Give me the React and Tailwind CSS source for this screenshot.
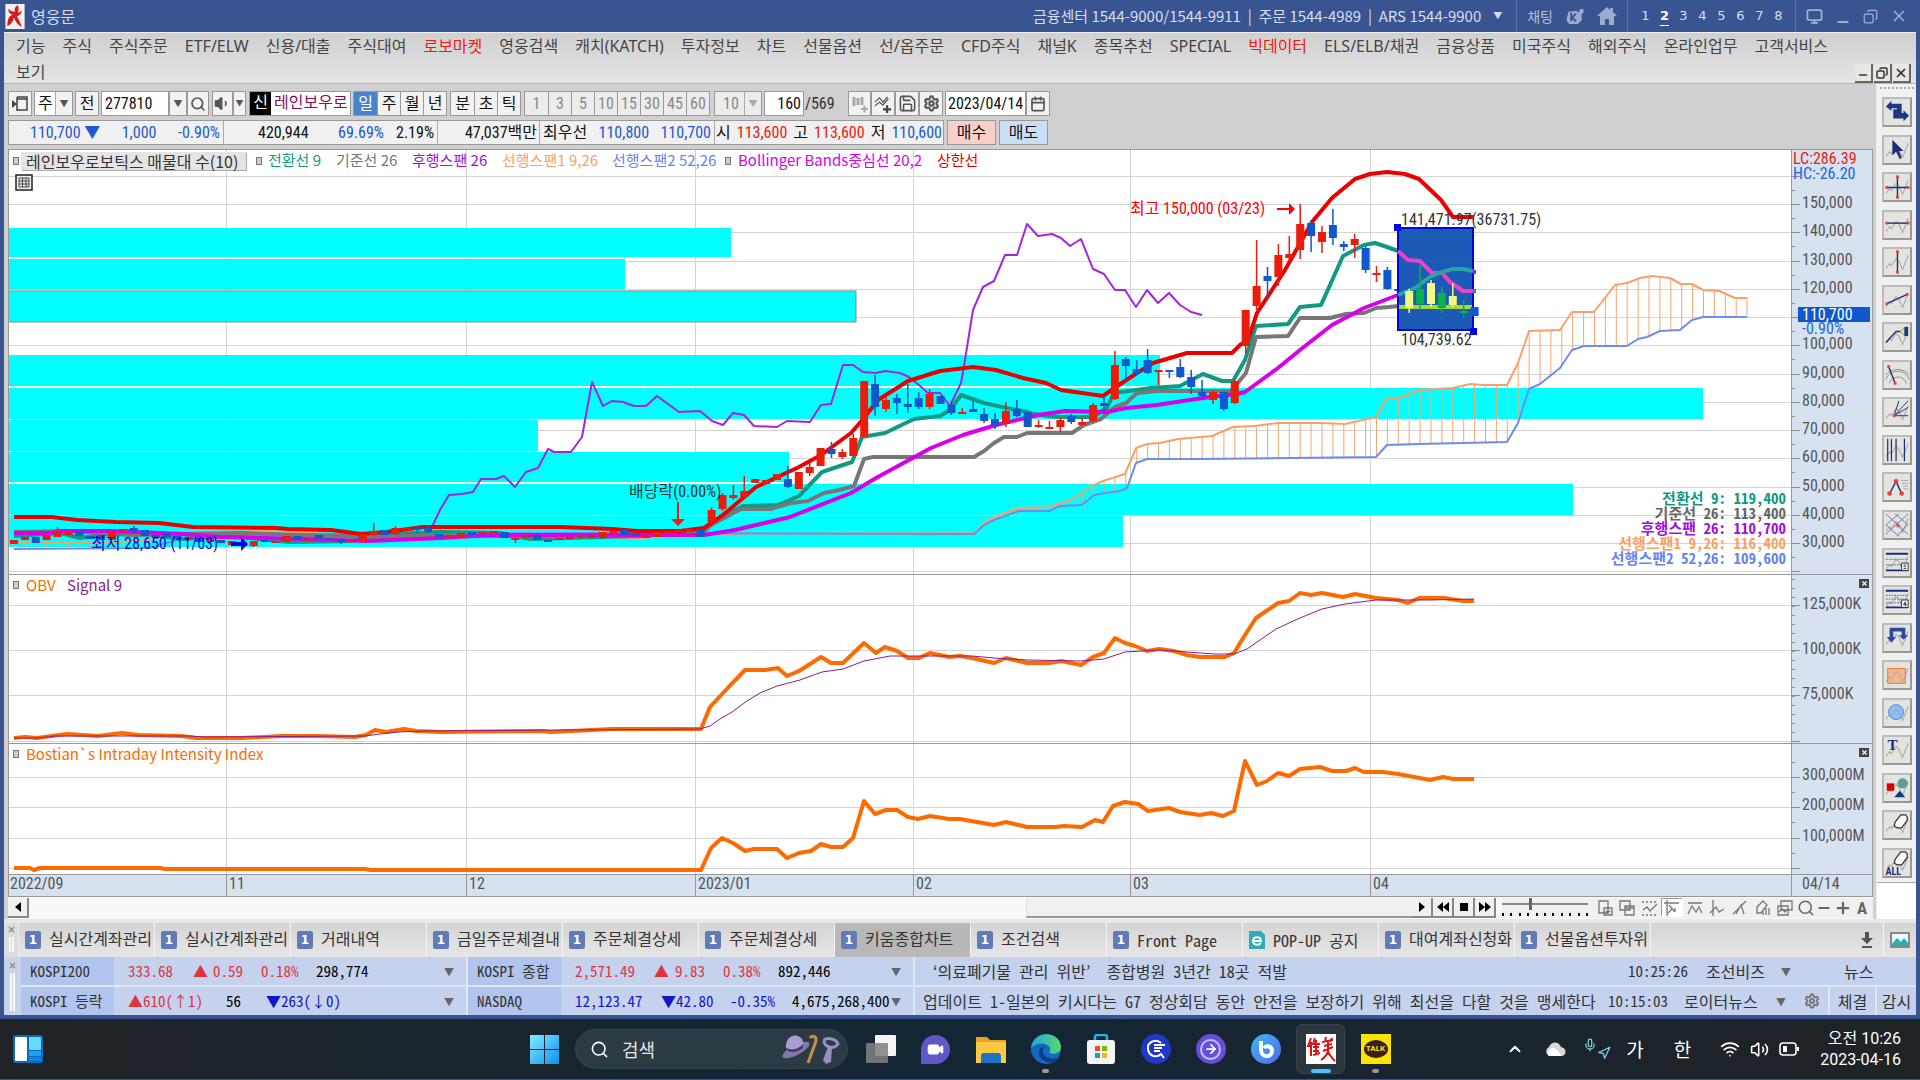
import React from "react";
import {
  Search, Settings, Save, Minus, Plus, Copy, ChevronUp,
  Wifi, Volume2, Mic, Navigation, Volume1, Calendar, Monitor, X, ArrowRight, Video,
} from "lucide-react";

const SANS = "font-['Roboto_Condensed','Noto_Sans_CJK_KR',sans-serif]";
const WIDE = "font-['Noto_Sans_CJK_KR',sans-serif]";
const MENU_FONT = "font-['Noto_Sans','Noto_Sans_CJK_KR',sans-serif]";
const MONO = "font-['Noto_Sans_Mono_CJK_KR',monospace]";

/* ---------- chart data ---------- */

const barX = (i) => 14 + 10.9 * i;
const priceY = (p) => 543 - 2.825 * (p - 30);

// index, colour, body top, body bottom, wick top, wick bottom
const CANDLES = [
  [0, "r", 540, 544], [1, "r", 537, 540], [2, "b", 537, 543], [3, "r", 535, 540], [4, "r", 532, 537, 527, 537],
  [5, "r", 532, 535], [6, "b", 531, 536], [7, "b", 536, 539], [8, "b", 535, 540], [9, "r", 531, 540],
  [10, "r", 529, 532], [11, "b", 528, 531, 526, 533], [12, "b", 530, 536], [13, "b", 535, 538], [14, "b", 533, 537],
  [15, "b", 536, 539], [16, "r", 537, 540], [17, "b", 538, 542], [18, "r", 539, 542], [19, "b", 540, 543],
  [20, "r", 541, 545], [22, "r", 541, 546, 541, 547], [23, "b", 540, 542], [24, "r", 541, 543], [25, "r", 536, 542],
  [26, "b", 536, 540], [27, "r", 539, 541], [28, "b", 535, 539], [29, "b", 538, 540], [30, "b", 539, 542, 539, 544],
  [31, "r", 540, 542], [32, "r", 534, 541], [33, "r", 531, 535, 523, 536], [34, "b", 530, 535], [35, "r", 528, 534, 526, 535],
  [36, "r", 528, 530], [37, "b", 528, 530, 526, 533], [38, "b", 528, 532, 526, 533], [39, "b", 534, 537], [40, "r", 535, 537],
  [41, "r", 533, 537], [42, "b", 532, 535], [43, "r", 532, 534], [44, "r", 531, 533], [45, "b", 532, 538],
  [46, "r", 538, 540, 537, 543], [47, "r", 536, 538], [48, "b", 535, 540], [49, "b", 540, 541], [50, "r", 538, 540],
  [51, "r", 537, 539], [52, "r", 536, 538], [53, "r", 536, 538], [54, "r", 532, 538], [55, "r", 531, 534],
  [56, "b", 530, 535], [57, "b", 533, 536], [58, "r", 536, 537], [59, "r", 532, 537], [60, "r", 531, 533],
  [61, "r", 530, 532], [62, "r", 529, 532], [63, "b", 529, 537], [64, "r", 510, 522, 507, 524], [65, "r", 495, 509, 493, 511],
  [66, "r", 495, 498, 485, 500], [67, "r", 491, 497, 476, 498], [68, "r", 479, 483], [69, "r", 480, 484], [70, "r", 474, 480],
  [71, "b", 479, 487, 466, 488], [72, "r", 472, 489], [73, "r", 467, 473, 462, 476], [74, "r", 448, 466], [75, "b", 449, 454, 442, 458],
  [76, "r", 452, 457, 449, 459], [77, "r", 438, 456, 434, 456], [78, "r", 381, 437], [79, "b", 384, 407, 375, 416], [80, "r", 400, 409, 397, 412],
  [81, "b", 398, 403, 394, 414], [82, "b", 404, 407, 384, 413], [83, "b", 398, 407, 392, 409], [84, "r", 394, 407, 389, 409], [85, "b", 396, 404],
  [86, "b", 405, 413, 401, 415], [87, "r", 412, 414, 408, 414], [88, "b", 409, 412, 401, 412], [89, "b", 414, 421, 408, 423], [90, "b", 419, 426, 413, 429],
  [91, "r", 411, 424, 402, 427], [92, "b", 409, 416, 400, 417], [93, "b", 412, 427], [94, "r", 425, 426, 420, 428], [95, "r", 427, 429, 421, 428],
  [96, "r", 420, 427, 418, 432], [97, "b", 416, 422, 414, 424], [98, "r", 422, 425, 418, 425], [99, "r", 405, 421, 403, 422], [100, "b", 403, 406, 395, 412],
  [101, "r", 365, 399, 351, 400], [102, "b", 359, 366, 357, 381], [103, "b", 369, 373, 360, 375], [104, "b", 360, 373, 349, 374], [105, "r", 370, 372, 370, 385],
  [106, "b", 370, 372, 370, 378], [107, "b", 367, 377, 359, 378], [108, "b", 377, 387, 370, 394], [109, "b", 392, 396, 380, 397], [110, "r", 392, 400, 391, 404],
  [111, "b", 392, 409, 391, 411], [112, "r", 381, 403, 380, 404], [113, "r", 310, 346, 310, 353], [114, "r", 286, 306, 240, 310], [115, "b", 276, 281, 267, 298],
  [116, "r", 255, 277, 244, 286], [117, "r", 254, 258, 236, 262], [118, "r", 224, 250, 204, 259], [119, "b", 223, 236, 220, 252], [120, "r", 232, 242, 226, 253],
  [121, "b", 225, 238, 209, 245], [122, "b", 244, 247, 241, 251], [123, "r", 239, 245, 234, 258], [124, "b", 248, 270, 246, 273], [125, "r", 273, 275, 266, 282],
  [126, "b", 270, 289, 267, 290], [127, "b", 289, 291],
];
const BOX_CANDLES = [
  [128, "y", 291, 308, 289, 313], [129, "g", 289, 304, 265, 310], [130, "y", 283, 304, 280, 307], [131, "g", 293, 308, 287, 313],
  [132, "y", 296, 305, 283, 307], [133, "g", 311, 313, 300, 317], [134, "b", 307, 316],
];
const CANDLE_FILL = { r: "#ea1c0c", b: "#1058cc", y: "#f2f880", g: "#08b050" };

const P = (s) => s.trim().split(/\s+/).map((q) => q.split(",").map(Number));

const BAND = "14,517 52,517 77,520 116,522 159,523 193,527 276,528 288,529 331,530 361,534 386,532 423,527 560,527 612,529 637,531 680,531 704,528 723,515 756,487 799,467 821,455 851,433 864,418 878,400 908,381 940,371 973,367 996,370 1023,378 1046,383 1061,390 1103,396 1116,387 1137,373 1153,363 1187,353 1232,353 1240,345 1248,340 1257,313 1285,270 1312,222 1332,198 1355,179 1370,174 1387,172 1405,174 1419,179 1441,200 1453,217 1474,217";
const TENKAN = "14,536 60,533 80,538 130,531 180,539 230,536 290,542 350,541 390,534 440,532 500,533 530,539 640,536 704,531 711,523 743,506 778,505 799,496 822,472 852,462 862,437 885,433 914,419 940,416 950,410 961,395 984,403 1007,408 1023,411 1034,414 1057,417 1093,417 1107,408 1114,393 1151,388 1180,386 1203,374 1222,381 1233,381 1245,360 1256,326 1288,324 1300,307 1321,305 1330,285 1343,256 1364,245 1375,243 1387,247 1398,251";
const KIJUN = "14,532 70,531 130,535 240,533 300,535 380,537 440,535 560,537 704,532 711,525 741,509 770,509 791,503 808,501 824,493 839,490 854,486 864,459 873,457 974,457 984,451 994,443 1004,437 1017,437 1027,433 1072,433 1084,425 1101,419 1115,407 1126,403 1137,393 1157,391 1231,391 1246,373 1256,337 1288,336 1300,318 1330,318 1346,314 1364,313 1376,308 1389,307 1398,306";
const CENTER = "14,533 52,533 60,531 110,531 184,534 220,537 306,539 367,541 441,538 490,535 704,535 735,530 790,517 851,493 876,478 931,448 963,435 996,425 1038,415 1065,411 1107,412 1126,408 1157,405 1183,401 1210,397 1237,394 1245,392 1278,368 1300,350 1332,325 1364,308 1398,295";
const CHIKOU = "432,527 440,510 449,495 462,494 473,492 481,479 496,479 504,476 515,487 526,472 538,468 548,449 554,452 571,452 582,437 592,382 603,406 612,401 623,402 634,406 646,406 657,396 679,412 700,411 712,421 723,425 733,413 744,415 754,426 777,427 787,421 810,422 821,405 831,404 843,365 853,365 863,372 876,373 885,371 900,373 909,377 919,385 928,393 940,393 950,406 961,383 964,366 973,310 983,287 994,281 1005,255 1017,255 1027,224 1038,236 1052,234 1061,238 1070,246 1081,239 1093,269 1104,274 1115,290 1125,290 1136,307 1147,290 1158,303 1169,293 1180,305 1191,312 1202,315";
const SPAN_A = "14,543 100,543 150,540 190,532 270,531 350,535 400,531 500,535 560,538 640,538 700,534 974,533 984,523 994,517 1019,508 1049,507 1071,500 1094,485 1103,481 1125,474 1136,448 1147,444 1160,443 1178,439 1212,436 1233,427 1254,426 1278,423 1321,423 1345,424 1376,417 1387,398 1398,398 1419,390 1453,388 1470,384 1484,385 1507,385 1518,363 1529,331 1560,330 1572,312 1594,312 1615,285 1627,283 1640,278 1652,276 1670,278 1681,284 1692,284 1703,290 1719,291 1735,298 1747,298";
const SPAN_B = "14,549 150,548 190,536 300,534 600,533 974,534 984,525 994,520 1019,511 1049,511 1060,506 1082,505 1094,495 1105,493 1120,491 1127,488 1136,463 1147,459 1202,459 1376,457 1387,445 1419,444 1507,442 1518,423 1529,389 1540,384 1560,368 1572,350 1584,346 1627,346 1638,339 1647,337 1660,331 1680,330 1692,320 1703,317 1747,317";
const OBV = "14,738 25,737 37,738 52,736 67,734 98,736 122,733 138,735 181,736 196,738 242,738 282,736 318,736 355,737 366,735 375,730 386,732 404,729 416,731 441,732 542,731 551,732 612,729 701,729 710,707 723,693 745,670 765,670 778,668 787,676 799,671 821,657 831,663 843,663 864,643 876,653 885,647 897,651 908,658 919,658 930,653 949,657 960,656 972,658 994,663 1006,658 1027,663 1049,663 1061,661 1081,665 1093,657 1104,653 1115,638 1125,643 1135,646 1147,651 1159,649 1174,651 1187,655 1200,657 1225,657 1234,653 1245,635 1256,618 1278,603 1289,601 1300,593 1311,595 1322,593 1343,597 1355,594 1376,598 1398,600 1408,603 1419,598 1444,598 1463,601 1474,601";
const SIGNAL = "14,738 37,738 55,736 190,736 205,737 365,736 380,734 398,732 425,731 700,729 710,726 720,719 732,712 747,701 760,693 777,686 800,680 822,672 843,669 864,661 890,656 940,656 972,656 994,658 1027,660 1081,661 1104,659 1125,652 1159,650 1187,652 1215,654 1234,654 1247,649 1260,640 1276,629 1300,618 1322,609 1345,604 1376,600 1430,600 1474,599";
const BII = "14,868 30,868 34,870 40,868 160,868 165,869 365,869 370,870 701,870 711,848 722,838 733,843 745,851 754,849 777,849 787,858 799,853 811,851 821,844 831,847 843,847 853,838 864,801 875,814 886,810 897,810 908,817 918,819 930,816 949,819 960,819 994,825 1006,822 1027,827 1055,827 1064,826 1082,827 1095,820 1103,822 1113,806 1125,802 1138,804 1148,811 1169,808 1180,812 1200,815 1211,813 1223,816 1234,811 1245,761 1257,785 1267,781 1278,773 1289,776 1300,769 1320,767 1332,771 1346,771 1355,768 1364,772 1383,772 1398,774 1430,780 1443,777 1453,779 1474,779";

const PROFILE = [
  [228, 29, 731], [259, 31, 625], [291, 31, 856, true], [355, 31, 1160], [388, 31, 1703],
  [420, 31, 538], [452, 30, 789], [484, 31, 1573], [516, 31, 1123],
];

const MONTHS = [[227, "11"], [467, "12"], [696, "2023/01"], [914, "02"], [1131, "03"], [1371, "04"]];

function at(points, x) {
  for (let i = 1; i < points.length; i++) {
    const [x0, y0] = points[i - 1];
    const [x1, y1] = points[i];
    if (x <= x1) return y0 + ((y1 - y0) * (x - x0)) / (x1 - x0);
  }
  return points[points.length - 1][1];
}

function Line({ pts, color, w }) {
  return <polyline points={pts} fill="none" stroke={color} strokeWidth={w} strokeLinejoin="round" />;
}

function Candle({ c }) {
  const [i, k, t, b, wt, wb] = c;
  const x = barX(i);
  return (
    <g fill={CANDLE_FILL[k]}>
      {wt !== undefined && <rect x={x - 0.75} y={wt} width="1.5" height={wb - wt} />}
      <rect x={x - 4} y={t} width="8" height={Math.max(b - t, 2)} />
    </g>
  );
}

function T({ x, y, fill = "#555", anchor, bold, size = 16, className, children }) {
  return (
    <text x={x} y={y} fill={fill} textAnchor={anchor} fontSize={size} fontWeight={bold ? 700 : 400} className={className}>
      {children}
    </text>
  );
}

function Chart() {
  const a = P(SPAN_A);
  const b = P(SPAN_B);
  const hatch = [];
  for (let i = 0; i < 13; i++) hatch.push(barX(i));
  for (let i = 89; i <= 159; i++) hatch.push(Math.min(barX(i), 1747));
  const grid = [];
  for (let p = 20; p <= 160; p += 10) grid.push(Math.round(priceY(p)));
  const subGrid = [605, 650, 695, 741, 777, 807, 838, 868];
  const minor = [];
  for (let p = 25; p <= 155; p += 10) minor.push(Math.round(priceY(p)));
  for (let y = 579; y < 741; y += 9) minor.push(y);
  [762, 792, 822, 853].forEach((y) => minor.push(y));
  const prices = [150, 140, 130, 120, 100, 90, 80, 70, 60, 50, 40, 30];
  return (
    <svg viewBox="8 149 1865 748" className={`block h-auto w-full ${SANS}`} role="img" aria-label="레인보우로보틱스 일봉 차트">
      <rect x="8" y="149" width="1865" height="748" fill="#fff" />
      <g fill="#d4d4d4">
        {grid.concat(subGrid).map((y, i) => <rect key={i} x="8" y={y} width="1784" height="1" />)}
        {MONTHS.map(([x]) => <rect key={x} x={x - 1} y="149" width="1" height="726" />)}
      </g>
      {PROFILE.map(([y, h, r, lined]) => (
        <rect key={y} x="7" y={y} width={r - 7} height={h} fill="#00ffff" stroke={lined ? "#888" : "none"} />
      ))}
      <g stroke="#f8a46c" strokeWidth="1">
        {hatch.map((x) => <line key={x} x1={x} x2={x} y1={at(a, x)} y2={at(b, x)} />)}
      </g>
      <Line pts={SPAN_A} color="#f8a068" w={2} />
      <Line pts={SPAN_B} color="#6c8cf0" w={2} />
      <Line pts={CHIKOU} color="#a424e0" w={2} />
      <Line pts={TENKAN} color="#109a84" w={4} />
      <Line pts={KIJUN} color="#777" w={4} />
      <Line pts={CENTER} color="#d800ea" w={4} />
      <Line pts={BAND} color="#ea0000" w={4} />
      {CANDLES.map((c) => <Candle key={c[0]} c={c} />)}

      {/* selected range */}
      <rect x="1398" y="228" width="75" height="102" fill="#1c5ab8" stroke="#0404e0" strokeWidth="2" />
      <g stroke="#1868a8"><path d="M1399 261h73M1399 233h73" /></g>
      <rect x="1399" y="305" width="73" height="4" fill="#a4dc30" />
      <Line pts="1398,251 1408,260 1420,261 1432,273 1442,273 1450,282 1463,291 1473,291" color="#f040c4" w={4} />
      <Line pts="1398,295 1415,288 1430,277 1442,272 1453,269 1463,269 1473,271" color="#28a4a4" w={4} />
      {BOX_CANDLES.map((c) => <Candle key={c[0]} c={c} />)}
      <rect x="1473" y="270" width="3" height="4" fill="#d800ea" />
      <rect x="1473" y="289" width="3" height="4" fill="#109a84" />
      <rect x="1394" y="224" width="7" height="7" fill="#0404e0" />
      <rect x="1470" y="328" width="7" height="7" fill="#0404e0" />
      <T x="1401" y="225" fill="#333">141,471.97(36731.75)</T>
      <T x="1401" y="345" fill="#333">104,739.62</T>

      {/* extremes */}
      <T x="1130" y="214" fill="#f00">최고 150,000 (03/23)</T>
      <path d="M1277 208h12v-5l6 6-6 6v-5h-12z" fill="#f00" />
      <T x="91" y="549" fill="#0000f0">최저 28,650 (11/03)</T>
      <path d="M231 542h10v-5l7 7-7 7v-5h-10z" fill="#0000f0" />
      <T x="629" y="497" fill="#333">배당락(0.00%)</T>
      <path d="M677 502h2v17h6l-7 7-7-7h6z" fill="#ea1c0c" />

      {/* lower panes */}
      <Line pts={OBV} color="#ff6a00" w={4} />
      <Line pts={SIGNAL} color="#8a1c8a" w={1} />
      <Line pts={BII} color="#ff6a00" w={4} />

      {/* current values */}
      <g className={MONO}>
        <T x="1786" y="504" fill="#109a84" anchor="end" bold size={15}>전환선 9: 119,400</T>
        <T x="1786" y="519" fill="#666" anchor="end" bold size={15}>기준선 26: 113,400</T>
        <T x="1786" y="534" fill="#a010e0" anchor="end" bold size={15}>후행스팬 26: 110,700</T>
        <T x="1786" y="549" fill="#f8a068" anchor="end" bold size={15}>선행스팬1 9,26: 116,400</T>
        <T x="1786" y="564" fill="#6484f0" anchor="end" bold size={15}>선행스팬2 52,26: 109,600</T>
      </g>

      {/* value axis */}
      <rect x="1792" y="149" width="81" height="748" fill="#d6e2f0" />
      <g fill="#8c9096">
        {grid.concat(subGrid).map((y, i) => <rect key={i} x="1792" y={y} width="8" height="1" />)}
        {minor.map((y, i) => <rect key={i} x="1792" y={y} width="3" height="1" />)}
      </g>
      {prices.map((p) => <T key={p} x="1802" y={priceY(p) + 4}>{`${p},000`}</T>)}
      {[["125,000K", 609], ["100,000K", 654], ["75,000K", 699], ["300,000M", 780], ["200,000M", 810], ["100,000M", 841]].map(([s, y]) => (
        <T key={s} x="1802" y={y}>{s}</T>
      ))}
      <T x="1793" y="164" fill="#ea1c0c">LC:286.39</T>
      <T x="1793" y="179" fill="#1c64dc">HC:-26.20</T>
      <rect x="1798" y="307" width="72" height="15" fill="#1058cc" />
      <T x="1802" y="320" fill="#fff">110,700</T>
      <T x="1802" y="334" fill="#1c64dc">-0.90%</T>

      {/* date axis */}
      <rect x="8" y="875" width="1865" height="22" fill="#d6e2f0" />
      <T x="10" y="889">2022/09</T>
      {MONTHS.map(([x, s]) => (
        <g key={x}>
          <rect x={x - 1} y="875" width="1" height="22" fill="#999" />
          <T x={x + 2} y="889">{s}</T>
        </g>
      ))}
      <T x="1802" y="889">04/14</T>
      <g fill="#999">
        <rect x="8" y="149" width="1865" height="1" />
        <rect x="8" y="574" width="1865" height="1" />
        <rect x="8" y="743" width="1865" height="1" />
        <rect x="8" y="874" width="1865" height="1" />
        <rect x="8" y="896" width="1865" height="1" />
        <rect x="8" y="149" width="1" height="748" />
        <rect x="1791" y="149" width="1" height="748" />
        <rect x="1872" y="149" width="1" height="748" />
      </g>
    </svg>
  );
}

/* ---------- title bar and menu ---------- */

function FlameLogo({ className }) {
  return (
    <svg viewBox="0 0 20 26" className={className} aria-hidden="true">
      <rect width="20" height="26" fill="#f2f2f2" />
      <path d="M13 1c-3 2-4 4-3 7-3 0-5-1-7-3 0 4 2 6 5 6-4 1-6 5-6 12 3-1 6-4 7-9 1 4 4 8 8 10-1-4-3-8-5-11 3-1 5-3 5-6-1 1-3 2-4 2 1-3 1-5 0-8z" fill="#d81c1c" />
    </svg>
  );
}

function TitleBar() {
  return (
    <header className={`flex h-8 items-center pl-[1px] pr-[8px] text-[15px] text-[#d6def0] ${WIDE}`}>
      <FlameLogo className="h-[25px] w-[20px]" />
      <h1 className="ml-[6px] text-[16px]">영웅문</h1>
      <div className="ml-auto flex items-center whitespace-pre">
        <span>금융센터 1544-9000/1544-9911  |  주문 1544-4989  |  ARS 1544-9900</span>
        <button aria-label="번호 목록" className="ml-3 text-[9px]">▼</button>
        <span className="ml-[14px] h-8 w-px bg-[#5a72a8]" />
        <button className="ml-[10px] text-[14px] text-[#b0bedc]">채팅</button>
        <svg viewBox="0 0 20 20" className="ml-3 h-[19px] w-[20px]" aria-hidden="true">
          <path d="M3 5l9-1 1 2 2-2V2h4v4l-2 1v7l-4 4H4l-3-4z" fill="#9cacd0" />
          <path d="M6 6v9M11 7l-4 4 4 4" stroke="#395591" strokeWidth="2" fill="none" />
        </svg>
        <svg viewBox="0 0 20 18" className="ml-3 h-[18px] w-[20px]" aria-hidden="true">
          <path d="M10 0L0 9h3v9h5v-6h4v6h5V9h3l-4-4V1h-3v2z" fill="#9cacd0" />
        </svg>
        <span className="ml-[10px] h-8 w-px bg-[#5a72a8]" />
        <nav className="ml-[8px] flex font-['DejaVu_Sans',sans-serif] text-[13px]">
          {[1, 2, 3, 4, 5, 6, 7, 8].map((n) => (
            <button key={n} className={n === 2 ? "mx-[5px] h-5 w-[9px] border-b border-white font-bold text-white" : "mx-[5px] h-5 w-[9px]"}>{n}</button>
          ))}
        </nav>
        <span className="ml-[7px] h-8 w-px bg-[#5a72a8]" />
        <div className="ml-[10px] flex items-center gap-3 text-[#a0b0d4]">
          <button aria-label="화면"><Monitor size={17} strokeWidth={2.5} /></button>
          <button aria-label="최소화"><Minus size={16} strokeWidth={3} className="mt-3" /></button>
          <button aria-label="이전 크기"><Copy size={15} className="-scale-x-100" /></button>
          <button aria-label="닫기"><X size={18} /></button>
        </div>
      </div>
    </header>
  );
}

const MENU = "기능,주식,주식주문,ETF/ELW,신용/대출,주식대여,로보마켓,영웅검색,캐치(KATCH),투자정보,차트,선물옵션,선/옵주문,CFD주식,채널K,종목추천,SPECIAL,빅데이터,ELS/ELB/채권,금융상품,미국주식,해외주식,온라인업무,고객서비스".split(",");

function MenuBar() {
  const box = "flex h-[19px] w-[18px] items-center justify-center border-b-2 border-r-2 border-[#666] bg-[#e8e8e0] text-[#333]";
  return (
    <div className="relative h-[52px] border-b border-t border-b-[#b4b4b4] border-t-[#eee] bg-linear-to-b from-[#d0d0d0] to-[#e4e4e4]">
      <nav className={`flex flex-wrap gap-x-[17px] pl-3 text-base leading-[26px] text-[#444] ${MENU_FONT}`}>
        {MENU.map((m) => (
          <button key={m} className={m === "로보마켓" || m === "빅데이터" ? "text-[#f01c0c]" : ""}>{m}</button>
        ))}
        <span className="basis-full"><button>보기</button></span>
      </nav>
      <div className="absolute bottom-0 right-[5px] flex gap-px">
        <button aria-label="창 최소화" className={box}><Minus size={12} strokeWidth={3} className="mt-1" /></button>
        <button aria-label="창 복원" className={box}><Copy size={12} strokeWidth={3} className="-scale-x-100" /></button>
        <button aria-label="창 닫기" className={box}><X size={14} strokeWidth={3} /></button>
      </div>
    </div>
  );
}

/* ---------- chart toolbar ---------- */

const edge = "border border-[#999]";

function Seg({ items, active, muted }) {
  return (
    <div className={`flex h-[25px] ${edge}`}>
      {items.map((s, i) => (
        <button
          key={s}
          className={
            (i ? "border-l border-[#999] " : "") +
            (s === active ? "w-[23px] bg-[#4884cc] text-white" : muted ? "w-[23px] bg-[#ececec] text-[#888]" : "w-[23px] bg-[#f2f2f2] text-[#111]")
          }
        >
          {s}
        </button>
      ))}
    </div>
  );
}

function IconButton({ label, className = "w-[24px]", children }) {
  return (
    <button aria-label={label} className={`flex h-[25px] shrink-0 items-center justify-center bg-[#f2f2f2] text-[#555] ${edge} ${className}`}>
      {children}
    </button>
  );
}

function Toolbar() {
  return (
    <div className="h-[65px] pt-[7px] text-[16px] leading-[22px] text-[#111]">
      <div className="flex items-center">
        <IconButton label="패널 열기">
          <svg viewBox="0 0 16 16" className="h-4 w-4"><path d="M5 1h10v13H5M5 1v14M5 3h10" fill="none" stroke="#444" strokeWidth="1.500" /><path d="M0 4l5 4-5 4z" fill="#444" /></svg>
        </IconButton>
        <div className={`relative ml-[2px] h-[25px] w-[39px] bg-white ${edge}`}>
          <select aria-label="종류" className="h-full w-full appearance-none pl-[3px]"><option>주</option></select>
          <span className="pointer-events-none absolute right-0 top-0 flex h-full w-[17px] items-center justify-center border-l border-[#aaa] bg-[#f2f2f2] text-[9px] text-[#555]">▼</span>
        </div>
        <IconButton label="전체" className="ml-[2px] w-[24px]"><span className="text-[#111]">전</span></IconButton>
        <input aria-label="종목코드" defaultValue="277810" className={`ml-[2px] h-[25px] w-[68px] bg-white pl-[3px] ${edge}`} />
        <IconButton label="종목 목록" className="w-[18px]"><span className="text-[9px]">▼</span></IconButton>
        <IconButton label="종목 검색" className="w-[22px]"><Search size={16} strokeWidth={2.5} /></IconButton>
        <IconButton label="음성" className="ml-[3px] w-[21px]"><Volume1 size={17} fill="#555" /></IconButton>
        <IconButton label="음성 설정" className="w-[13px]"><span className="text-[8px]">▼</span></IconButton>
        <div className={`ml-[3px] flex h-[25px] w-[102px] overflow-hidden whitespace-nowrap bg-white ${edge}`}>
          <span className="w-[21px] shrink-0 bg-black text-center text-white">신</span>
          <span className="pl-[3px] text-[#8c0c50]">레인보우로</span>
        </div>
        <div className="ml-[2px] flex gap-[3px]">
          <Seg items={["일", "주", "월", "년"]} active="일" />
          <Seg items={["분", "초", "틱"]} />
          <Seg items={["1", "3", "5", "10", "15", "30", "45", "60"]} muted />
        </div>
        <div className={`relative ml-[4px] h-[25px] w-[48px] bg-[#ececec] text-[#888] ${edge}`}>
          <select aria-label="분 간격" className="h-full w-full appearance-none pl-2"><option>10</option></select>
          <span className="pointer-events-none absolute right-0 top-0 flex h-full w-[17px] items-center justify-center border-l border-[#aaa] text-[9px] text-[#aaa]">▼</span>
        </div>
        <input aria-label="표시 봉 수" defaultValue="160" className={`ml-[2px] h-[25px] w-[40px] bg-white pr-[2px] text-right ${edge}`} />
        <span className="w-[44px] pl-px text-[#333]">/569</span>
        <IconButton label="봉 추가" className="w-[23px]">
          <svg viewBox="0 0 18 18" className="h-[18px] w-[18px]" stroke="#aaa" strokeWidth="2"><path d="M3 2v9M7 3v7M11 2v8" strokeWidth="3" /><path d="M10 14h7M13.500 10.500v7" /></svg>
        </IconButton>
        <IconButton label="지표 추가">
          <svg viewBox="0 0 20 20" className="h-[18px] w-[18px]" fill="none" stroke="#444" strokeWidth="1.200"><path d="M1 8l5-5 4 5 5-6M1 12l5-4 4 3 6-7" /><path d="M10 16h9M14.500 11.500v9" strokeWidth="2.500" /></svg>
        </IconButton>
        <IconButton label="저장"><Save size={19} /></IconButton>
        <IconButton label="설정"><Settings size={17} strokeWidth={3} /></IconButton>
        <input aria-label="기준일" defaultValue="2023/04/14" className={`ml-[2px] h-[25px] w-[81px] bg-white pl-[2px] ${edge}`} />
        <IconButton label="달력"><Calendar size={16} strokeWidth={2.5} /></IconButton>
      </div>
      <div className="mt-[4px] flex items-center gap-[3px]">
        <div className={`flex h-[25px] w-[936px] items-center bg-[#f0f0f0] leading-[23px] ${edge}`}>
          <div className="flex w-[215px] justify-between border-r border-[#aaa] pl-[21px] pr-[3px] text-[#1c58d0]">
            <span>110,700 ▼</span><span>1,000</span><span>-0.90%</span>
          </div>
          <div className="flex w-[214px] border-r border-[#aaa] pl-[34px]">
            <span className="w-[80px]">420,944</span><span className="w-[58px] text-[#1c58d0]">69.69%</span><span>2.19%</span>
          </div>
          <div className="w-[102px] border-r border-[#aaa] pr-[2px] text-right">47,037백만</div>
          <div className="flex w-[175px] justify-between border-r border-[#aaa] px-[3px]">
            <span>최우선</span><span className="text-[#1c58d0]">110,800</span><span className="text-[#1c58d0]">110,700</span>
          </div>
          <div className="flex flex-1 justify-between px-px">
            <span>시</span><span className="text-[#ea1c0c]">113,600</span><span>고</span><span className="text-[#ea1c0c]">113,600</span><span>저</span><span className="text-[#1c58d0]">110,600</span>
          </div>
        </div>
        <button className={`h-[25px] w-[49px] bg-[#f8d0c8] ${edge}`}>매수</button>
        <button className={`h-[25px] w-[49px] bg-[#c8dff6] ${edge}`}>매도</button>
      </div>
    </div>
  );
}

function Dot() {
  return <span className="inline-block h-[8px] w-[6px] shrink-0 border border-[#777] bg-[#ccc]" />;
}

function ChartArea() {
  return (
    <div className={`relative ${WIDE}`}>
      <Chart />
      <div className="absolute left-[5px] top-[2px] flex h-[19px] items-center whitespace-nowrap text-[15px]">
        <Dot />
        <span className="ml-[2px] mr-[10px] w-[225px] bg-[#e4e4e4] px-[5px] text-[16px] leading-[18px] text-[#333] shadow-[1px_1px_0_#aaa]">레인보우로보틱스 매물대 수(10)</span>
        <Dot />
        <span className="ml-[6px] w-[68px] text-[#109a84]">전환선 9</span>
        <span className="w-[76px] text-[#777]">기준선 26</span>
        <span className="w-[90px] text-[#a010e0]">후행스팬 26</span>
        <span className="w-[110px] text-[#f8a068]">선행스팬1 9,26</span>
        <span className="w-[113px] text-[#6484f0]">선행스팬2 52,26</span>
        <Dot />
        <span className="ml-[7px] w-[199px] text-[#d800ea]">Bollinger Bands중심선 20,2</span>
        <span className="text-[#ea0000]">상한선</span>
      </div>
      <svg viewBox="0 0 18 17" className="absolute left-[7px] top-[25px] h-[17px] w-[18px]" aria-hidden="true">
        <rect x="1" y="1" width="16" height="15" fill="#eee" stroke="#222" strokeWidth="1.500" />
        <path d="M4 4h10v9H4zM4 7h10M4 10h10M7.500 4v9M11 4v9" fill="none" stroke="#444" />
      </svg>
      <div className="absolute left-[5px] top-[427px] flex items-center text-[15px] leading-[18px]">
        <Dot />
        <span className="ml-[7px] w-[41px] text-[#ff6a00]">OBV</span>
        <span className="text-[#8a1c8a]">Signal 9</span>
      </div>
      <div className="absolute left-[5px] top-[596px] flex items-center text-[15px] leading-[18px]">
        <Dot />
        <span className="ml-[7px] text-[#ff6a00]">Bostian`s Intraday Intensity Index</span>
      </div>
      <button aria-label="OBV 닫기" className="absolute right-[4px] top-[430px] flex h-[9px] w-[10px] items-center justify-center bg-[#444] text-white"><X size={7} strokeWidth={4} /></button>
      <button aria-label="지표 닫기" className="absolute right-[4px] top-[599px] flex h-[9px] w-[10px] items-center justify-center bg-[#444] text-white"><X size={7} strokeWidth={4} /></button>
    </div>
  );
}

function MiniIcon({ d, label, frame }) {
  return (
    <button aria-label={label} className={frame ? "flex w-[21px] items-center justify-center bg-white shadow-[-1px_-1px_0_#999]" : "flex w-[21px] items-center justify-center"}>
      <svg viewBox="0 0 18 18" className="h-[18px] w-[18px]" fill="none" stroke="#777" strokeWidth="1.300"><path d={d} /></svg>
    </button>
  );
}

function ScrollRow() {
  const b = "flex h-[20px] w-[21px] items-center justify-center border-b-2 border-r-2 border-[#888] bg-[#f0f0f0]";
  return (
    <div className="flex h-[22px] items-start bg-[#f8f8f8] pt-px">
      <button aria-label="왼쪽으로" className={b}><svg viewBox="0 0 6 10" className="h-[10px] w-[6px]"><path d="M6 0v10L0 5z" /></svg></button>
      <div className="flex flex-1 justify-end">
        <div className="h-[20px] w-[386px] border-b-2 border-l border-b-[#999] border-l-[#ddd] bg-[#f0f0f0]" />
      </div>
      <button aria-label="재생" className={b}><svg viewBox="0 0 6 10" className="h-[10px] w-[6px]"><path d="M0 0v10l6-5z" /></svg></button>
      <button aria-label="뒤로" className={b}><svg viewBox="0 0 12 10" className="h-[10px] w-[12px]"><path d="M6 0v10L0 5zM12 0v10L6 5z" /></svg></button>
      <button aria-label="정지" className={b}><svg viewBox="0 0 8 8" className="h-[8px] w-[8px]"><path d="M0 0h8v8H0z" /></svg></button>
      <button aria-label="앞으로" className={b}><svg viewBox="0 0 12 10" className="h-[10px] w-[12px]"><path d="M0 0v10l6-5zM6 0v10l6-5z" /></svg></button>
      <div className="ml-[6px] w-[86px] bg-[#f0f0f0]">
        <input aria-label="재생 속도" type="range" defaultValue="32" className="block h-[12px] w-full appearance-none bg-[linear-gradient(#888,#888)] bg-[length:100%_2px] bg-center bg-no-repeat [&::-webkit-slider-thumb]:h-[12px] [&::-webkit-slider-thumb]:w-[3px] [&::-webkit-slider-thumb]:appearance-none [&::-webkit-slider-thumb]:bg-[#666]" />
        <div className="flex justify-between pt-[3px]">
          {Array.from({ length: 11 }, (_, i) => <span key={i} className="h-[3px] w-[2px] bg-black" />)}
        </div>
      </div>
      <div className="flex h-[20px] w-[285px] items-center justify-between bg-[#f0f0f0] pl-[6px] pr-[2px] text-[#666]">
        <MiniIcon label="창 추가" d="M3 2h9v12H3zM8 9h8v7H8zM12 10v5M9.500 12.500h5" />
        <MiniIcon label="창 겹치기" d="M2 2h10v9H2zM7 7h9v9H7zM7 9h9" />
        <MiniIcon label="영역" d="M1 3h2m2 0h2m2 0h2m2 0h2M1 16h2m2 0h2m2 0h2m2 0h2M2 11l4-3 3 4 7-7" />
        <MiniIcon label="세로축" frame d="M4 1v16M1 4h15M6 6l6 7M12 9v4M5 14l4-4" />
        <MiniIcon label="가로축" d="M2 4h14M2 15l4-8 4 6 3-5 3 6" />
        <MiniIcon label="봉" d="M5 1v16M2 14l6-6 3 5 5-3" />
        <MiniIcon label="추세선" d="M2 15l13-13M5 15l5-9 3 9" />
        <MiniIcon label="모두 지우기" d="M4 8l6-6 4 4-6 8H4zM10 10v6M13 9v7M16 9v7" />
        <MiniIcon label="겹쳐 보기" d="M5 2h11v9H5zM2 7h10v9H2zM3 13l3-3 3 3 2-3" />
        <button aria-label="돋보기"><Search size={18} strokeWidth={2} /></button>
        <button aria-label="축소"><Minus size={16} strokeWidth={3} /></button>
        <button aria-label="확대"><Plus size={18} strokeWidth={3} /></button>
        <button className="w-[18px] text-[17px] font-bold leading-[18px]">A</button>
      </div>
    </div>
  );
}

/* ---------- drawing tools ---------- */

const ZIG = "M3 22l4-5 2 2 5-8 3 3 4 9 6-15";
const navy = "#1c2c80";
const RedDots = ({ p }) => p.map(([x, y]) => <rect key={`${x}-${y}`} x={x - 1.5} y={y - 1.5} width="3" height="3" fill="#e84040" />);

const TOOLS = [
  ["순환", <path key="a" d="M3 9l6-6v3h11v10h2v-3l6 6-6 6v-3H11V12h4v-1H9v3z" fill="#1c3884" />, true],
  ["선택", <path key="a" d="M10 4v17l4-4 4 8 2-2-3-7h5z" fill={navy} />],
  ["십자선", <g key="a"><path d="M15.500 4v22M4 15.500h23" stroke={navy} strokeWidth="1.500" /><RedDots p={[[15.5, 4], [15.5, 26], [4, 15.5], [27, 15.5]]} /></g>],
  ["수평선", <g key="a"><path d="M4 13h23" stroke={navy} strokeWidth="1.500" /><RedDots p={[[4, 13], [27, 13]]} /></g>],
  ["수직선", <g key="a"><path d="M15.500 4v22" stroke={navy} strokeWidth="1.500" /><RedDots p={[[15.5, 4], [15.5, 26]]} /></g>],
  ["추세선", <g key="a"><path d="M4 19l22-10" stroke={navy} strokeWidth="1.500" /><RedDots p={[[4, 19], [26, 9]]} /></g>],
  ["자유선", <g key="a"><path d="M3 21l11-12h6" fill="none" stroke={navy} strokeWidth="1.500" /><path d="M18 9l5-4v8z" fill="#f4dc90" stroke="#555" strokeWidth=".5" /><path d="M23 4h4v10h-4z" fill="#1c3884" /></g>],
  ["피보나치 아크", <g key="a"><path d="M3 20c4-12 22-12 25 0M3 15c5-8 20-8 25 0M7 24c2-9 16-9 18 0" fill="none" stroke="#888" /><path d="M6 6l7 18" stroke={navy} strokeWidth="1.500" /><RedDots p={[[6, 6], [13, 24]]} /></g>, true],
  ["피보나치 팬", <g key="a"><path d="M12 19l5-16M12 19L27 3M12 19l15-9M12 19h15" stroke={navy} fill="none" /><RedDots p={[[12, 19]]} /></g>],
  ["시간대", <path key="a" d="M5 3v24M9 3v24M14 3v24M23 3v24" stroke={navy} strokeWidth="1.300" />],
  ["삼각 추세", <g key="a"><path d="M7 22l7-13 6 13" stroke={navy} strokeWidth="1.500" fill="none" /><g fill="#e84040"><circle cx="14" cy="9" r="2.500" /><circle cx="7" cy="22" r="2.500" /><circle cx="20" cy="22" r="2.500" /></g><path d="M19 8h8M20 11h7M21 14h6M22 17h5" stroke="#aaa" /></g>, true],
  ["갠 그리드", <g key="a"><path d="M3 3l24 22M3 15l14 12M13 3l14 12M27 3L3 25M17 3L3 15M27 14L15 27" stroke="#6878b0" fill="none" /><RedDots p={[[16, 16]]} /></g>],
  ["등분선", <g key="a"><path d="M3 5h24M3 23h24" stroke={navy} strokeWidth="2" /><path d="M3 11h24M3 17h24" stroke="#5868a8" strokeDasharray="2 1" /><rect x="20" y="15" width="7" height="8" fill="#fff" stroke="#333" /><path d="M22 17h3M22 19h3M22 21h3" stroke="#333" /></g>],
  ["4등분선", <g key="a"><path d="M3 5h24M3 23h24" stroke={navy} strokeWidth="2" /><path d="M3 10h24M3 14h24M3 18h24" stroke="#5868a8" strokeDasharray="2 1" /><rect x="20" y="15" width="7" height="8" fill="#fff" stroke="#333" /><path d="M24 22v-5l-2 3h4" stroke="#333" fill="none" /></g>],
  ["되돌림", <path key="a" d="M7 4h17v8h3l-5 5-5-5h3V8H11v6h3l-5 6-5-6h3z" fill="#2c48a0" />],
  ["사각형", <rect key="a" x="5" y="8" width="19" height="16" fill="#f0a070aa" stroke="#f07830" />],
  ["원", <ellipse key="a" cx="14" cy="14" rx="8" ry="8" fill="#68b0f0aa" stroke="#3c84d8" />],
  ["문자", null],
  ["도형", <g key="a"><rect x="4" y="10" width="8" height="8" fill="#d00404" /><circle cx="21" cy="10" r="5.500" fill="#609c98" /><path d="M12 25l6-7 6 7z" fill="#0c3c80" /></g>],
  ["지우개", <path key="a" d="M13 12l6-8h5l2 2v4l-6 8h-5l-3-2z" fill="#fff8ec" stroke="#333" strokeWidth="1.300" />],
  ["전체 지우개", <path key="a" d="M13 11l6-8h5l2 2v4l-6 8h-5l-3-2z" fill="#fff8ec" stroke="#333" strokeWidth="1.300" />],
];

function DrawTools() {
  return (
    <aside className="w-[39px] shrink-0 bg-white">
      <div className="flex h-[799px] flex-col items-center border-b border-[#aaa] bg-[#f0f0f0]">
        <span className="mt-[3px] h-[3px] w-[34px] border-t-2 border-dotted border-[#aaa]" />
        <div className="mt-[7px] flex h-[781px] flex-col justify-between">
          {TOOLS.map(([label, art, plain]) => (
            <button key={label} aria-label={label} className="relative h-[30px] w-[30px] border-2 border-[#999] border-l-[#bbb] border-t-[#bbb] bg-[#e4e4de]">
              <svg viewBox="1 1 28 28" className="block h-full w-full">
                {!plain && <path d={ZIG} fill="none" stroke="#aaa" strokeWidth="1.200" />}
                {art}
              </svg>
              {label === "문자" && <span className="absolute left-[4px] top-px font-['Liberation_Serif',serif] text-[15px] font-bold leading-[15px] text-[#1c2c80]">T</span>}
              {label === "전체 지우개" && <span className="absolute bottom-0 left-[2px] bg-[#e4e4de] text-[10px] font-bold leading-[9px] text-[#1c2c80]">ALL</span>}
            </button>
          ))}
        </div>
      </div>
    </aside>
  );
}

/* ---------- window tabs and tickers ---------- */

const TABS = ["실시간계좌관리", "실시간계좌관리", "거래내역", "금일주문체결내", "주문체결상세", "주문체결상세", "키움종합차트", "조건검색", "Front Page", "POP-UP 공지", "대여계좌신청화", "선물옵션투자위"];

function WindowTabs() {
  return (
    <div className="flex h-[34px] bg-linear-to-b from-[#d4d4d4] to-[#e6e6e6]">
      <div className="flex w-[15px] flex-col items-center border-r border-[#eee] bg-[#dcdcdc] text-[#888]">
        <X size={9} strokeWidth={3} className="mt-[2px]" />
        <span className="mt-[3px] h-[15px] w-[5px] border-x-2 border-[#f8f8f8]" />
      </div>
      {TABS.map((t, i) => (
        <button key={i} className={`flex w-[136px] shrink-0 items-center overflow-hidden whitespace-nowrap border-r border-[#f4f4f4] pl-[6px] text-left text-[16px] text-[#333] ${t === "키움종합차트" ? "bg-[#b8b8b8]" : ""} ${i > 7 && i < 10 ? MONO : ""}`}>
          {t === "POP-UP 공지" ? (
            <svg viewBox="0 0 16 18" className="h-[18px] w-[16px] shrink-0"><path d="M0 0h12l4 4v14H0z" fill="#30acb8" /><path d="M4 10h8c0-5-8-5-8 0 0 4 5 5 8 2" fill="none" stroke="#fff" strokeWidth="1.800" /></svg>
          ) : (
            <span className="flex h-[18px] w-[16px] shrink-0 items-center justify-center rounded-[2px] bg-[#607cb8] font-['DejaVu_Sans',sans-serif] text-[12px] font-bold text-white">1</span>
          )}
          <span className="ml-[8px]">{t}</span>
        </button>
      ))}
      <div className="ml-auto flex items-center">
        <button aria-label="내리기" className="mr-[10px]"><svg viewBox="0 0 12 16" className="h-4 w-3" fill="#555"><path d="M4 0h4v6h4l-6 6-6-6h4zM1 14h10v2H1z" /></svg></button>
        <span className="h-full w-px bg-[#f4f4f4]" />
        <button aria-label="화면 저장" className="mx-[6px]"><svg viewBox="0 0 20 16" className="h-4 w-5"><rect width="20" height="16" fill="#888" /><rect x="2" y="2" width="16" height="12" fill="#e8fafa" /><path d="M2 12l5-6 4 4 3-4 4 5v3H2z" fill="#28b0b0" /></svg></button>
      </div>
    </div>
  );
}

const UP = "text-[#e0343c]";
const DOWN = "text-[#1414c8]";

function Quote({ name, cells }) {
  return (
    <div className="flex w-[447px] shrink-0 items-center border-r-2 border-[#dfe6f4]">
      <span className="flex h-full w-[93px] items-center bg-[#b0c4ee] pl-[9px]">{name}</span>
      <div className="flex flex-1 whitespace-pre pl-[14px]">
        {cells.map(([s, c, w], i) => <span key={i} className={`${c} ${w}`}>{s}</span>)}
      </div>
      <button aria-label={`${name} 목록`} className="pr-[12px] text-[10px] text-[#666]">▼</button>
    </div>
  );
}

function Tickers() {
  const row = "flex h-[28px] items-stretch bg-[#c4d2ee]";
  return (
    <div className={`flex whitespace-nowrap bg-[#dfe6f4] text-[15px] text-[#333] ${MONO}`}>
      <div className="flex w-[17px] flex-col items-center bg-[#c8d4ea] text-[#888]">
        <X size={9} strokeWidth={3} className="mt-[4px]" />
        <span className="mt-[3px] h-[38px] w-[5px] border-x-2 border-[#f8f8f8]" />
      </div>
      <div className="flex min-w-0 flex-1 flex-col gap-[2px]">
        <div className={row}>
          <Quote name="KOSPI200" cells={[["333.68", UP, "w-[65px]"], ["▲", UP, "w-[20px]"], ["0.59", UP, "w-[48px]"], ["0.18%", UP, "w-[55px]"], ["298,774", "text-black", ""]]} />
          <Quote name="KOSPI 종합" cells={[["2,571.49", UP, "w-[79px]"], ["▲", UP, "w-[21px]"], ["9.83", UP, "w-[48px]"], ["0.38%", UP, "w-[55px]"], ["892,446", "text-black", ""]]} />
          <span className="min-w-0 flex-1 self-center overflow-hidden whitespace-pre pl-[18px] text-[16px] leading-[26px]">‘의료폐기물 관리 위반’  종합병원 3년간 18곳 적발</span>
          <span className="w-[78px] self-center">10:25:26</span>
          <span className="w-[75px] self-center text-[16px]">조선비즈</span>
          <button aria-label="언론사 목록" className="w-[63px] self-center text-left text-[10px] text-[#666]">▼</button>
          <button className="w-[72px] text-left text-[16px]">뉴스</button>
        </div>
        <div className={row}>
          <Quote name="KOSPI 등락" cells={[["▲610(↑1)", UP, "w-[98px]"], ["56", "text-black", "w-[40px]"], ["▼263(↓0)", DOWN, ""]]} />
          <Quote name="NASDAQ" cells={[["12,123.47", DOWN, "w-[86px]"], ["▼42.80", DOWN, "w-[69px]"], ["-0.35%", DOWN, "w-[62px]"], ["4,675,268,400", "text-black", ""]]} />
          <span className="min-w-0 flex-1 self-center overflow-hidden pl-[8px] text-[16px] leading-[26px]">업데이트 1-일본의 키시다는 G7 정상회담 동안 안전을 보장하기 위해 최선을 다할 것을 맹세한다</span>
          <span className="w-[76px] self-center">10:15:03</span>
          <span className="w-[92px] self-center text-[16px]">로이터뉴스</span>
          <button aria-label="언론사 목록" className="w-[28px] self-center text-left text-[10px] text-[#666]">▼</button>
          <button aria-label="뉴스 설정" className="w-[24px] text-[#777]"><Settings size={16} strokeWidth={3} /></button>
          <button className="w-[47px] border-l-2 border-[#dfe6f4] text-[16px]">체결</button>
          <button className="w-[41px] border-l-2 border-[#dfe6f4] text-[16px]">감시</button>
        </div>
      </div>
    </div>
  );
}

/* ---------- taskbar ---------- */

function App30({ label, children, running }) {
  return (
    <button aria-label={label} className="relative flex h-[50px] w-[49px] items-center justify-center">
      {children}
      {running && <span className="absolute bottom-px h-[4px] w-[7px] rounded-full bg-[#999]" />}
    </button>
  );
}

function Taskbar() {
  const s = "h-[30px] w-[30px]";
  return (
    <footer className="relative flex h-[60px] items-center bg-linear-to-r from-[#1f2326] via-[#122635] to-[#1f2326] font-['Noto_Sans_CJK_KR',sans-serif] text-white">
      <button aria-label="위젯" className="ml-[13px]">
        <svg viewBox="0 0 30 30" className={s}><rect width="30" height="28" y="1" rx="2" fill="#1068b8" /><rect x="2" y="3" width="12" height="24" rx="1" fill="#fff" /><rect x="16" y="3" width="12" height="13" rx="1" fill="#64dcfc" /><rect x="16" y="17" width="12" height="5" fill="#18a4f4" /><rect x="16" y="23" width="12" height="4" fill="#0c84e0" /></svg>
      </button>
      <div className="ml-[477px] flex items-center gap-[6px]">
        <button aria-label="시작" className="mx-[10px]">
          <svg viewBox="0 0 29 29" className="h-[29px] w-[29px]"><defs><linearGradient id="win" x2="1" y2="1"><stop stopColor="#80ecff" /><stop offset="1" stopColor="#1090f0" /></linearGradient></defs><path d="M0 0h14v14H0zM15 0h14v14H15zM0 15h14v14H0zM15 15h14v14H15z" fill="url(#win)" /></svg>
        </button>
        <label className="mr-[2px] flex h-[40px] w-[273px] items-center rounded-full border border-[#36434c] bg-[#2c3a44] pl-[14px] pr-[5px]">
          <Search size={19} strokeWidth={2} className="shrink-0" />
          <input aria-label="검색" placeholder="검색" className="ml-[13px] w-[140px] bg-transparent text-[18px] placeholder:text-[#e4e8ec]" />
          <svg viewBox="0 0 60 32" className="ml-auto h-[32px] w-[60px]">
            <ellipse cx="14" cy="17" rx="15" ry="5" transform="rotate(-28 14 17)" fill="#8078a8" />
            <path d="M4 15C3 6 10 1 16 3c5 2 6 7 5 12-5 4-12 5-17 0z" fill="#a8a0cc" />
            <path d="M5 15c5 3 12 1 16-4v4c-5 4-11 5-15 3z" fill="#403868" />
            <path d="M26 30l8-22c1-5-4-6-6-3" fill="none" stroke="#c88c48" strokeWidth="3" />
            <path d="M42 8c0-4 12-3 14 3-2 3-6 4-8 3-3 0-6-3-6-6z" fill="none" stroke="#9890c0" strokeWidth="3" />
            <path d="M46 14l4 1-1 14-5 2-3-4z" fill="#9890c0" />
          </svg>
        </label>
        <div className="flex gap-[6px]">
          <App30 label="작업 보기"><svg viewBox="0 0 30 30" className={s}><rect x="9" y="1" width="21" height="21" rx="1" fill="#f4f4f4" /><rect y="9" width="22" height="20" rx="1" fill="#808080dd" /></svg></App30>
          <App30 label="채팅"><span className="flex h-[29px] w-[29px] items-center justify-center rounded-full rounded-bl-sm bg-[#6058c8]"><Video size={17} fill="#fff" /></span></App30>
          <App30 label="파일 탐색기"><svg viewBox="0 0 30 28" className="h-[28px] w-[30px]"><path d="M0 2h11l3 3h16v20H0z" fill="#e8a41c" /><path d="M0 7h30v21H0z" fill="#fcc844" /><path d="M5 21c0-2 1-3 3-3h14c2 0 3 1 3 3v7H5z" fill="#1874c4" /></svg></App30>
          <App30 label="Edge" running><svg viewBox="0 0 30 30" className={s}><defs><linearGradient id="edg" x2="1"><stop stopColor="#24a8e0" /><stop offset="1" stopColor="#58d868" /></linearGradient></defs><circle cx="15" cy="15" r="15" fill="#1468c0" /><path d="M0 14C2-4 29-4 30 13c0 6-7 8-11 6-2-1 1-2 0-5C17 8 5 8 0 14z" fill="url(#edg)" /><path d="M12 16c-1 6 6 10 13 8 2 0 0 2-2 3-7 4-16-2-15-9 0-4 3-5 5-5z" fill="#0c3c84" /></svg></App30>
          <App30 label="스토어"><svg viewBox="0 0 30 30" className={s}><path d="M9 8V3c0-1 1-2 2-2h8c1 0 2 1 2 2v5" fill="none" stroke="#28b0e8" strokeWidth="2.500" /><rect x="1" y="6" width="28" height="24" rx="3" fill="#f4f4f4" /><path d="M9 12h5v5H9z" fill="#f04c24" /><path d="M16 12h5v5h-5z" fill="#7cb800" /><path d="M9 19h5v5H9z" fill="#08a0ec" /><path d="M16 19h5v5h-5z" fill="#fcb800" /></svg></App30>
          <App30 label="빠른 검색"><svg viewBox="0 0 30 30" className={s}><circle cx="15" cy="15" r="15" fill="#2038c8" /><path d="M20 9c-5-5-14-1-13 6 1 8 9 9 13 5l3 4M13 11h11M13 14h8M13 17h6" fill="none" stroke="#fff" strokeWidth="2" /></svg></App30>
          <App30 label="전송"><span className="flex h-[30px] w-[30px] items-center justify-center rounded-full bg-[#6450d8]"><span className="flex h-[21px] w-[21px] items-center justify-center rounded-full border-2 border-[#c8bcff]"><ArrowRight size={14} strokeWidth={3} /></span></span></App30>
          <App30 label="빅스비"><svg viewBox="0 0 30 30" className={s}><defs><linearGradient id="bix" x2="1" y2="1"><stop stopColor="#40b8f4" /><stop offset="1" stopColor="#4c68f0" /></linearGradient></defs><circle cx="15" cy="15" r="15" fill="url(#bix)" /><path d="M10 7v9c0 8 11 8 11 1 0-5-6-6-8-3" fill="none" stroke="#fff" strokeWidth="4" /></svg></App30>
          <button aria-label="영웅문" className="relative flex h-[50px] w-[49px] items-center justify-center rounded-md border border-[#36434c] bg-[#2a353e]">
            <svg viewBox="0 0 30 30" className={s}><rect width="30" height="30" fill="#fff" /><path d="M5 4l-3 8h4M5 8v14M9 4l-2 6h7M10 6v14M7 13h6M7 17h6M7 21l7-2M20 3l-1 5M26 4l-2 4M16 8l11-2M18 12l8-2M17 17l10-4M22 6v11c-1 5-4 7-7 9M22 17c1 4 4 7 7 10" fill="none" stroke="#d81414" strokeWidth="2" /></svg>
            <span className="absolute bottom-0 h-[4px] w-[20px] rounded-full bg-[#4cc0f8]" />
          </button>
          <App30 label="카카오톡" running><span className="flex h-[30px] w-[30px] items-center justify-center bg-[#fce400]"><span className="flex h-[18px] w-[24px] items-center justify-center rounded-[50%] bg-[#3c1e1e] font-['Roboto',sans-serif] text-[8px] font-bold text-[#fce400]">TALK</span></span></App30>
        </div>
      </div>
      <div className="ml-auto flex items-center pr-[19px]">
        <button aria-label="숨겨진 아이콘"><ChevronUp size={18} strokeWidth={2.5} /></button>
        <svg viewBox="0 0 22 15" className="ml-[20px] h-[15px] w-[22px]"><path d="M5 14a5 5 0 010-9c2-6 10-6 12 0 6 1 6 9 0 9z" fill="#d8d8d8" /><path d="M5 14a5 5 0 017-7l6 7z" fill="#fff" /></svg>
        <span className="ml-[17px] flex text-[#80dcf4]"><Mic size={14} /><Navigation size={14} className="mt-2" /></span>
        <span className="ml-[15px] text-[19px]">가</span>
        <span className="ml-[30px] text-[19px]">한</span>
        <span className="ml-[29px] flex items-center gap-[10px]"><Wifi size={20} /><Volume2 size={19} />
          <svg viewBox="0 0 20 14" className="h-[14px] w-[20px]"><rect x="1" y="1" width="16" height="12" rx="3" fill="none" stroke="#fff" strokeWidth="1.600" /><path d="M4 4h4v6H4zM18 5h2v4h-2z" fill="#fff" /></svg>
        </span>
        <div className="ml-[21px] text-right font-['Roboto','Noto_Sans_CJK_KR',sans-serif] text-[16px] leading-[21px]">
          <div>오전 10:26</div>
          <div>2023-04-16</div>
        </div>
      </div>
    </footer>
  );
}

export default function App() {
  return (
    <div className={`flex min-h-screen flex-col bg-[#395591] text-[15px] ${SANS}`}>
      <div className="px-1 pb-1">
        <TitleBar />
        <main>
          <MenuBar />
          <div className="flex bg-[#d0d0d0]">
            <div className="min-w-0 flex-1 border-r border-[#eee] pl-1 pr-[3px]">
              <Toolbar />
              <ChartArea />
              <ScrollRow />
            </div>
            <DrawTools />
          </div>
          <div className="h-[4px] bg-[#e8e8e8]" />
          <WindowTabs />
          <Tickers />
        </main>
      </div>
      <Taskbar />
    </div>
  );
}
